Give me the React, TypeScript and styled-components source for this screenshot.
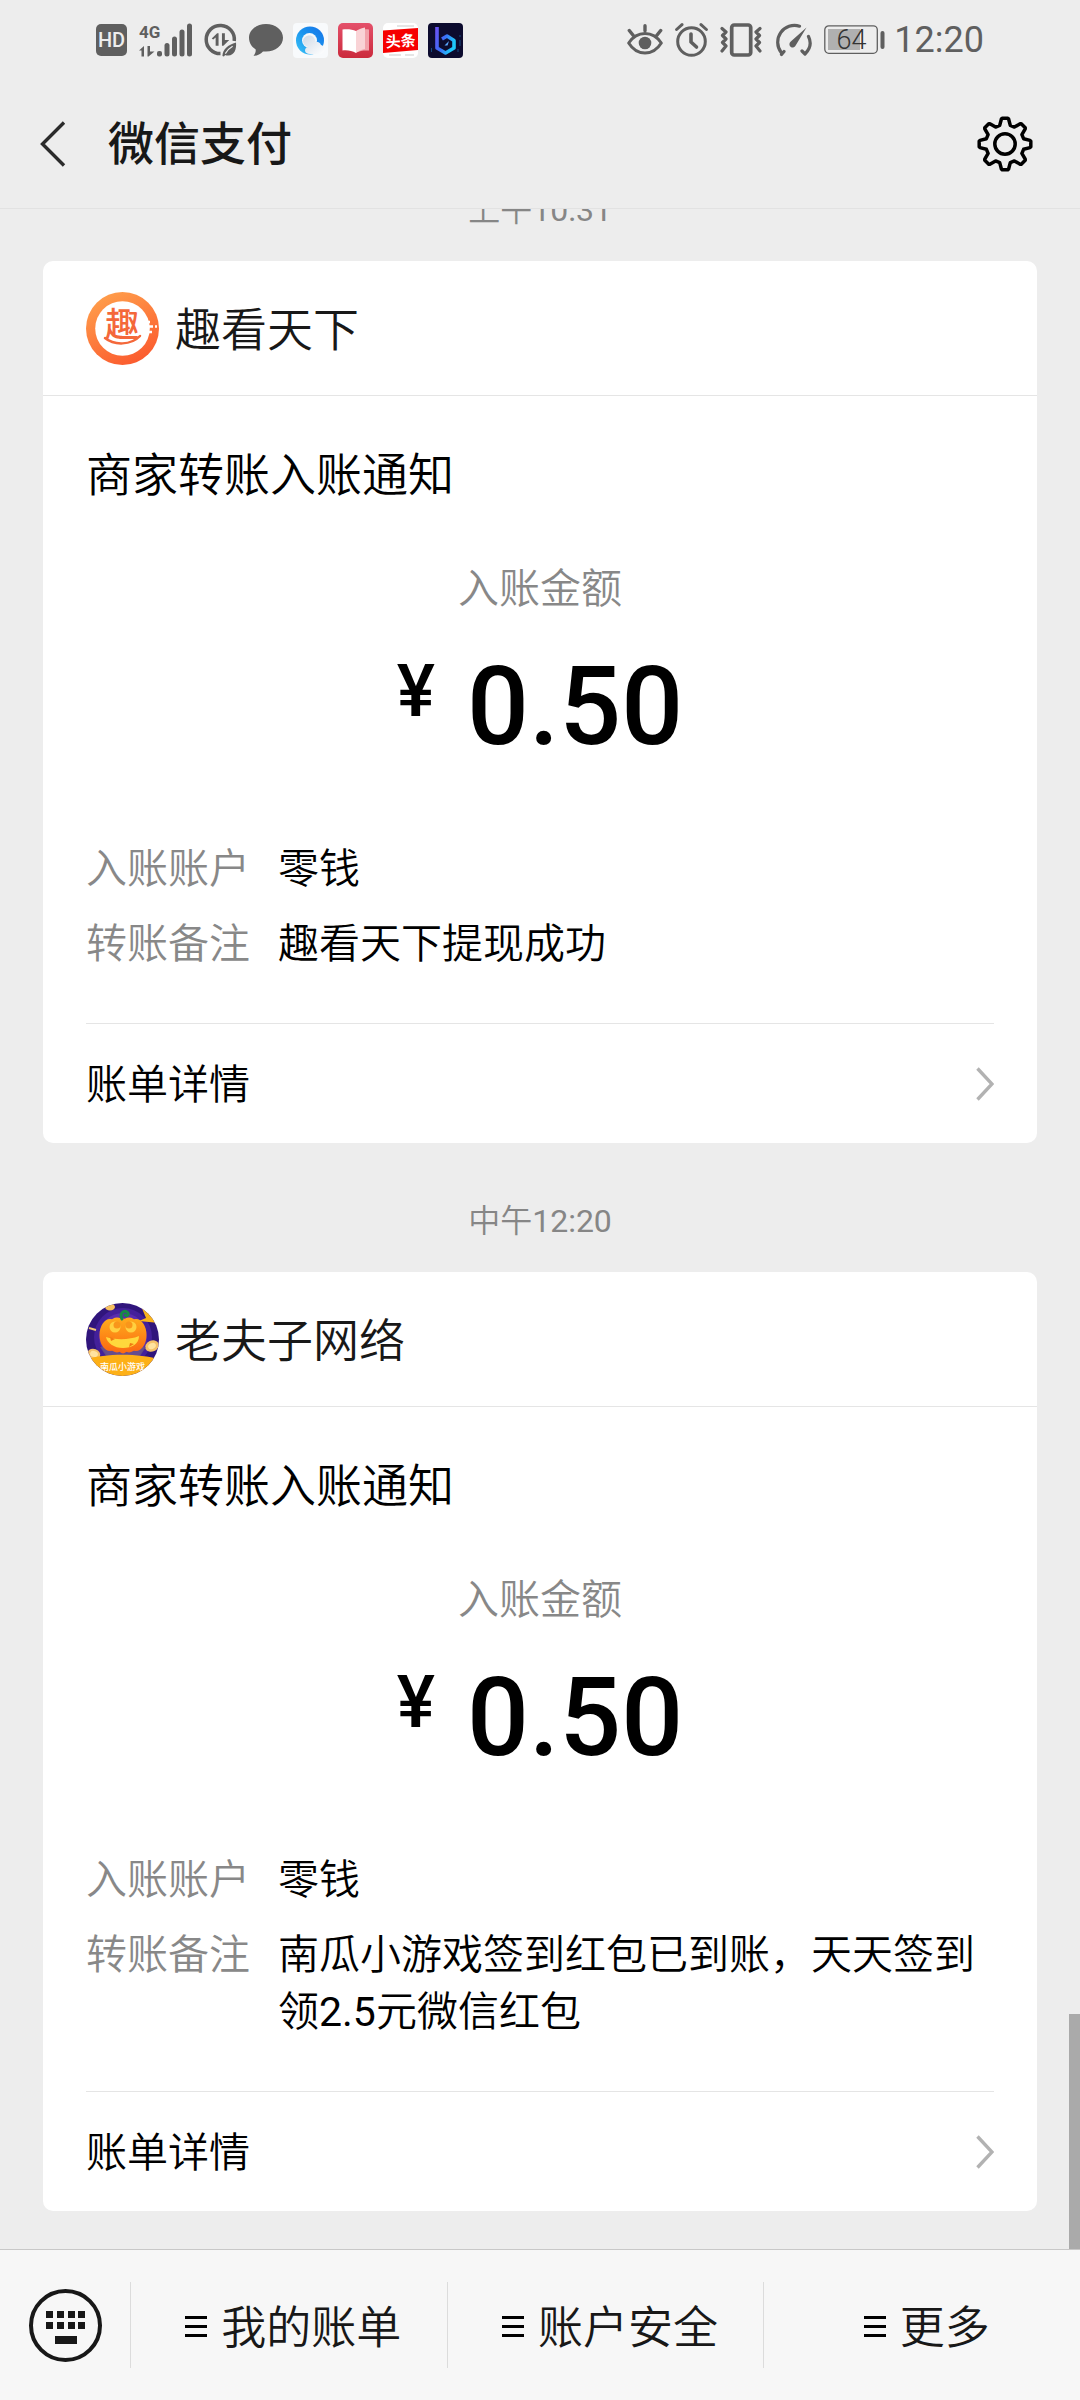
import React from 'react';
import styled, { createGlobalStyle } from 'styled-components';

const FONT = 'Roboto, "Noto Sans CJK SC", sans-serif';
const INK = '#5f5f5f';

const GlobalStyle = createGlobalStyle`
  *, *::before, *::after { box-sizing: border-box; }
  body { margin: 0; background: #ededed; }
  button { margin: 0; padding: 0; border: 0; background: none; color: inherit; font: inherit; cursor: pointer; }
`;

const Screen = styled.div`
  display: flex;
  flex-direction: column;
  height: 100vh;
  background: #ededed;
  color: #000;
  font-family: ${FONT};
  font-weight: 350;
`;

const StatusBar = styled.div`
  flex: none;
  display: flex;
  align-items: center;
  justify-content: space-between;
  height: 80px;
  padding: 0 96px;
  color: ${INK};
`;

const StatusGroup = styled.div<{ $gap: number }>`
  display: flex;
  align-items: center;
  gap: ${(p) => p.$gap}px;
  svg { display: block; flex: none; }
`;

const Clock = styled.time`
  font-size: 36px;
  line-height: 40px;
  font-weight: 400;
`;

const NavBar = styled.header`
  flex: none;
  display: flex;
  align-items: center;
  height: 129px;
  padding: 0 47px 0 40px;
  border-bottom: 1px solid #e2e2e2;
`;

const Heading = styled.h1`
  flex: 1;
  margin: 0;
  padding-left: 42px;
  font-size: 46px;
  line-height: 60px;
  font-weight: 500;
  color: #181818;
`;

const IconButton = styled.button`
  display: flex;
  align-items: center;
  justify-content: center;
  svg { display: block; }
`;

const ThreadFrame = styled.div`
  position: relative;
  flex: 1;
  min-height: 0;
`;

/* Reversed column, so the conversation opens at its newest message. */
const ThreadScroll = styled.main`
  display: flex;
  flex-direction: column-reverse;
  height: 100%;
  overflow-y: auto;
  scrollbar-width: none;
`;

const Thread = styled.div`
  padding: 0 43px 38px;
`;

const ScrollThumb = styled.div`
  position: absolute;
  right: 0;
  bottom: 0;
  width: 11px;
  height: 235px;
  background: #aaa;
`;

/* Latin digits are set a step heavier than the thin Chinese text around them. */
const Digits = styled.span`
  font-weight: 400;
`;

const Stamp = styled.time`
  display: block;
  padding: 58px 0 31px;
  text-align: center;
  font-size: 32px;
  line-height: 40px;
  color: #868686;
`;

const Card = styled.article`
  background: #fff;
  border-radius: 10px;
`;

const CardHeader = styled.div`
  display: flex;
  align-items: center;
  gap: 16px;
  height: 135px;
  padding: 0 43px;
  border-bottom: 1px solid #e5e5e5;
  svg { display: block; flex: none; }
`;

const Merchant = styled.span`
  padding-top: 4px;
  font-size: 46px;
  line-height: 60px;
  color: #181818;
`;

const CardBody = styled.div`
  padding: 49px 43px 50px;
`;

const CardTitle = styled.h2`
  margin: 0;
  font-size: 46px;
  line-height: 60px;
  font-weight: inherit;
`;

const AmountLabel = styled.div`
  margin-top: 56px;
  text-align: center;
  font-size: 41px;
  line-height: 57px;
  color: #888;
`;

const Amount = styled.div`
  display: flex;
  justify-content: center;
  align-items: flex-start;
  gap: 32px;
  margin-top: 34px;
  font-size: 109px;
  line-height: 110px;
  font-weight: 500;
`;

const Currency = styled.span`
  font-size: 72px;
  line-height: 80px;
`;

const Details = styled.dl`
  display: grid;
  grid-template-columns: 164px 1fr;
  gap: 18px 28px;
  margin: 79px 0 0;
  font-size: 41px;
  line-height: 57px;
`;

const Term = styled.dt`
  color: #888;
`;

const Value = styled.dd`
  margin: 0;
`;

const DetailLink = styled.a`
  display: flex;
  align-items: center;
  justify-content: space-between;
  height: 120px;
  margin: 0 43px;
  border-top: 1px solid #e5e5e5;
  font-size: 41px;
  line-height: 57px;
  color: #000;
  text-decoration: none;
  svg { display: block; }
`;

const LinkText = styled.span`
  padding-top: 4px;
`;

const BottomBar = styled.nav`
  flex: none;
  display: flex;
  align-items: center;
  height: 151px;
  border-top: 1px solid #c8c8c8;
  background: #f7f7f7;
`;

const KeyboardButton = styled(IconButton)`
  width: 130px;
`;

const MenuButton = styled.button`
  flex: 1;
  display: flex;
  align-items: center;
  justify-content: center;
  gap: 14px;
  height: 86px;
  padding-left: 9px;
  border-left: 1px solid #dcdcdc;
  color: #181818;
  svg { display: block; }
`;

const MenuText = styled.span`
  padding-top: 8px;
  font-size: 45px;
  line-height: 60px;
`;

const HdIcon = () => (
  <svg width="31" height="32" viewBox="0 0 31 32">
    <rect width="31" height="32" rx="5" fill={INK} />
    <text x="15.5" y="23" textAnchor="middle" fontFamily="Roboto, sans-serif" fontWeight="500" fontSize="20" fill="#ededed">HD</text>
  </svg>
);

const SignalIcon = () => (
  <svg width="53" height="34" viewBox="0 0 53 34" fill={INK}>
    <text x="0" y="14.5" fontFamily="Roboto, sans-serif" fontWeight="700" fontSize="17">4G</text>
    <path d="M0 27.5 5 23v10.500H2.500V27.500zM8.500 23H11v5.500h4.500L9.500 33.500h-1z" />
    <rect x="18" y="28" width="5" height="5.500" rx="2" />
    <rect x="25.500" y="20" width="5" height="13.500" rx="2.500" />
    <rect x="33" y="13.500" width="5" height="20" rx="2.500" />
    <rect x="40.500" y="6.500" width="5" height="27" rx="2.500" />
    <rect x="48" y="0.500" width="5" height="33" rx="2.500" />
  </svg>
);

const DataSaverIcon = () => (
  <svg width="33" height="34" viewBox="0 0 34 34" fill="none">
    <path d="M17 31A14.500 14.500 0 1 1 31.200 18" stroke={INK} strokeWidth="3.600" />
    <path d="M8 15.500 13.500 10h1.500v13h-3v-8.500L9.500 16.500zM18.500 10h3v7H26l-6 6h-1.500z" fill={INK} />
    <path d="M33 19.500c.6 7-1.500 13-8 13.500-1.500.1-2.400-.2-3.200-.6L20.500 34l-1.500-.5c.2-7 5.500-11.500 14-14z" fill={INK} />
    <path d="M22 31c2-3.500 4-5.500 7.500-7.500" stroke="#ededed" strokeWidth="1.200" />
  </svg>
);

const BubbleIcon = () => (
  <svg width="34" height="32" viewBox="0 0 34 32">
    <path d="M17 0c9.500 0 17 6 17 13.800s-7.500 13.800-17 13.800c-1 0-2 0-3-.2-2.500 2.800-5.500 4.200-9.500 4.300 1.700-2 2.400-4 2.200-6.300C2.600 23 0 18.800 0 13.800 0 6 7.500 0 17 0z" fill={INK} />
  </svg>
);

const BrowserAppIcon = () => (
  <svg width="35" height="35" viewBox="0 0 35 35">
    <defs>
      <linearGradient id="ring" x1="0" y1="1" x2="1" y2="0">
        <stop offset="0" stopColor="#3cc6f7" />
        <stop offset="0.500" stopColor="#1a94ee" />
        <stop offset="1" stopColor="#1672e8" />
      </linearGradient>
      <linearGradient id="cloud" x1="0" y1="0" x2="1" y2="1">
        <stop offset="0" stopColor="#cfd9e6" />
        <stop offset="1" stopColor="#fff" />
      </linearGradient>
    </defs>
    <rect width="35" height="35" rx="4" fill="#f8fafc" />
    <circle cx="17" cy="17.500" r="14" fill="url(#ring)" />
    <circle cx="16.500" cy="17.500" r="7.500" fill="#f4f7fa" />
    <path d="M17 31c-3 0-5-1.500-5-3.500s1-3 3-3.500c-3-1-5-3-5-6 0-3 3-5.500 6.500-5.500S22 15 22.500 19c1.500-.5 4.500 0 5.500 3 2 .5 3.500 2 3.500 4.500S29 31 26.500 31z" fill="url(#cloud)" />
  </svg>
);

const ReaderAppIcon = () => (
  <svg width="35" height="35" viewBox="0 0 35 35">
    <defs>
      <linearGradient id="cover" x1="0" y1="0" x2="0" y2="1">
        <stop offset="0" stopColor="#e4506a" />
        <stop offset="1" stopColor="#cb2a3c" />
      </linearGradient>
    </defs>
    <rect width="35" height="35" rx="5" fill="url(#cover)" />
    <path d="M18 8c4-1.500 8-2 13-1.500v21c-5-.3-9 .2-13 2z" fill="#f2a3ab" />
    <path d="M18 8c3-2 6-3 9-3.500v21.500c-3 .5-6 1.500-9 4z" fill="#f9d3d6" />
    <path d="M4.500 6.500C10 6 14.500 6.500 18 8v22c-4-2.300-8.500-3-13.500-2.500z" fill="#fff" />
  </svg>
);

const NewsAppIcon = () => (
  <svg width="35" height="35" viewBox="0 0 35 35">
    <rect width="35" height="35" rx="5" fill="#fff" />
    <path d="M14 3h17M6 32h12M22 32h9" stroke="#ddd" strokeWidth="1.500" />
    <path d="M0 7.500 35 5v22L0 30z" fill="#f60000" />
    <text x="17.500" y="23.500" textAnchor="middle" fontFamily='"Noto Sans CJK SC", sans-serif' fontWeight="700" fontSize="15" fill="#fff" transform="rotate(-4 17.500 17.500)">头条</text>
  </svg>
);

const BlueAppIcon = () => (
  <svg width="35" height="35" viewBox="0 0 35 35" fill="none">
    <defs>
      <linearGradient id="neon" x1="0" y1="0" x2="1" y2="0.600">
        <stop offset="0" stopColor="#6a52f4" />
        <stop offset="0.500" stopColor="#3c6cf6" />
        <stop offset="1" stopColor="#1ec8fa" />
      </linearGradient>
    </defs>
    <rect width="35" height="35" rx="4" fill="#0c0b2e" />
    <path d="M9 4v21l8.500 5 8.500-5v-7.500L19 13l-5 3" stroke="url(#neon)" strokeWidth="3.600" strokeLinejoin="round" />
    <path d="M16.500 22.500 21 18l-1.500 4.500z" fill="#5aa8ff" />
    <path d="M32 12v2M32 17v6M30 26v3M3.500 25v4" stroke="#174a80" strokeWidth="1" />
  </svg>
);

const EyeIcon = () => (
  <svg width="36" height="32" viewBox="0 0 36 32" fill="none" stroke={INK} strokeWidth="3.400" strokeLinecap="round">
    <path d="M1.700 19C6 12.500 11.500 9.500 18 9.500S30 12.500 34.300 19C30 26 24.500 29 18 29S6 26 1.700 19z" strokeWidth="3" strokeLinejoin="round" />
    <path d="M18 1.800v5M2.300 6.500l4 5M33.700 6.500l-4 5" />
    <circle cx="18" cy="19" r="6.300" fill={INK} stroke="none" />
  </svg>
);

const AlarmIcon = () => (
  <svg width="33" height="34" viewBox="0 0 33 34" fill="none" stroke={INK} strokeWidth="3" strokeLinecap="round" strokeLinejoin="round">
    <circle cx="16.500" cy="18.500" r="13.800" />
    <path d="M16 11v8l5.500 5" strokeWidth="3.600" />
    <path d="M1.600 6.500 7 1.600M31.400 6.500 26 1.600" />
  </svg>
);

const VibrateIcon = () => (
  <svg width="42" height="34" viewBox="0 0 42 34" fill="none" stroke={INK} strokeLinecap="round" strokeLinejoin="round">
    <rect x="11.700" y="2" width="19" height="30" rx="2.500" strokeWidth="3.700" />
    <path d="M2 5.500 6 9 2.500 12.500 6 16l-3.500 3.500L6 23l-4 5M40 5.500 36 9l3.500 3.500L36 16l3.500 3.500L36 23l4 5" strokeWidth="3.200" />
  </svg>
);

const GaugeIcon = () => (
  <svg width="38" height="34" viewBox="0 0 38 34" fill="none" stroke={INK} strokeLinecap="round">
    <path d="M25.500 3.200A16.800 16.800 0 0 0 7.200 29.500M7.500 31.500 10 28.500" strokeWidth="3.200" />
    <path d="M34.500 13.500c3.500 7 1 13-3.500 17.500M31 31l-3-3" strokeWidth="3.200" />
    <path d="M32.500 4.500 21.800 22.300A3.300 3.300 0 1 1 16.500 18.700z" fill={INK} stroke="none" />
  </svg>
);

const BatteryIcon = () => (
  <svg width="61" height="30" viewBox="0 0 61 30">
    <rect x="0.800" y="0.800" width="52.500" height="27.500" rx="4" fill="none" stroke={INK} strokeWidth="1.300" />
    <rect x="4" y="4" width="32" height="21" fill="#b0b0b0" />
    <rect x="56.500" y="6" width="4" height="18" rx="2" fill={INK} />
    <text x="27.500" y="24" textAnchor="middle" fontFamily="Roboto, sans-serif" fontWeight="300" fontSize="27" fill="#333">64</text>
  </svg>
);

const BackIcon = () => (
  <svg width="26" height="46" viewBox="0 0 26 46" fill="none">
    <path d="M24 1.500 2.500 23 24 44.500" stroke="#2b2b2b" strokeWidth="3.400" />
  </svg>
);

/* One tooth, as offsets from the hub; the outline repeats it every 45 degrees. */
const TOOTH: [number, number][] = [
  [-5.3, -18.6],
  [-3.6, -25],
  [-2.8, -25.8],
  [2.8, -25.8],
  [3.6, -25],
  [5.3, -18.6],
];

const GEAR_POINTS = Array.from({ length: 8 }, (_, i) => {
  const a = (i * Math.PI) / 4;
  return TOOTH.map(
    ([x, y]) =>
      `${(28 + x * Math.cos(a) - y * Math.sin(a)).toFixed(2)},${(28 + x * Math.sin(a) + y * Math.cos(a)).toFixed(2)}`,
  ).join(' ');
}).join(' ');

const GearIcon = () => (
  <svg width="56" height="56" viewBox="0 0 56 56" fill="none" stroke="#000" strokeWidth="3.500" strokeLinejoin="round">
    <polygon points={GEAR_POINTS} />
    <circle cx="28" cy="28" r="10.200" />
  </svg>
);

const QukanLogo = () => (
  <svg width="73" height="73" viewBox="0 0 73 73">
    <defs>
      <linearGradient id="orange" x1="0.200" y1="0" x2="0.700" y2="1">
        <stop offset="0" stopColor="#ffa04c" />
        <stop offset="1" stopColor="#fb5a2e" />
      </linearGradient>
    </defs>
    <circle cx="36.500" cy="36.500" r="36.500" fill="url(#orange)" />
    <circle cx="36.500" cy="36.500" r="27.300" fill="#fff" />
    <path d="M60 30h4M60 34.500h7M69 34.500h2M60 40h6" stroke="#fff" strokeWidth="2.500" />
    <text x="36" y="45" textAnchor="middle" fontFamily='"Noto Sans CJK SC", sans-serif' fontWeight="500" fontSize="34" fill="#f4683a">趣</text>
    <path d="M19 46c9 7.500 26 7.500 35-2" fill="none" stroke="#f4683a" strokeWidth="2.500" strokeLinecap="round" />
  </svg>
);

const PumpkinLogo = () => (
  <svg width="73" height="73" viewBox="0 0 73 73">
    <defs>
      <clipPath id="disc">
        <circle cx="36.500" cy="36.500" r="36.500" />
      </clipPath>
      <linearGradient id="pumpkin" x1="0" y1="0" x2="0" y2="1">
        <stop offset="0" stopColor="#ffab1c" />
        <stop offset="1" stopColor="#fb6a12" />
      </linearGradient>
    </defs>
    <g clipPath="url(#disc)">
      <rect width="73" height="73" fill="#30157c" />
      <circle cx="37" cy="34" r="29" fill="#43209a" />
      <circle cx="37" cy="34" r="24" fill="#5a2cae" />
      <path d="M55 3 60 15 53 18l20 2V8z" fill="#f9b41c" />
      <ellipse cx="24" cy="4" rx="5" ry="3.500" fill="#f6c060" />
      <path d="M3 25l7 2" stroke="#f6c878" strokeWidth="2" />
      <ellipse cx="66" cy="43" rx="7" ry="5.500" fill="#f5c26a" transform="rotate(-25 66 43)" />
      <ellipse cx="66" cy="43" rx="4" ry="3" fill="#ffe3a0" transform="rotate(-25 66 43)" />
      <ellipse cx="8" cy="51" rx="6.500" ry="5" fill="#f5c26a" transform="rotate(20 8 51)" />
      <ellipse cx="8" cy="51" rx="4" ry="3" fill="#ffe3a0" transform="rotate(20 8 51)" />
      <path d="M14 44h46l-8 12H22z" fill="#6a5a80" opacity="0.700" />
      <ellipse cx="24" cy="32" rx="10.500" ry="16" fill="url(#pumpkin)" />
      <ellipse cx="50" cy="32" rx="10.500" ry="16" fill="url(#pumpkin)" />
      <ellipse cx="31" cy="32" rx="11" ry="17.500" fill="url(#pumpkin)" />
      <ellipse cx="43" cy="32" rx="11" ry="17.500" fill="url(#pumpkin)" />
      <ellipse cx="37" cy="33" rx="8" ry="17.500" fill="url(#pumpkin)" />
      <path d="M36 16c-3-6 2-9 5-7s0 5-2 3" fill="none" stroke="#178a45" strokeWidth="3" strokeLinecap="round" />
      <circle cx="29" cy="24" r="5.500" fill="#ffd040" />
      <circle cx="45" cy="24" r="5.500" fill="#ffd040" />
      <circle cx="31" cy="22" r="3.500" fill="#f9961a" />
      <circle cx="43" cy="22" r="3.500" fill="#f9961a" />
      <path d="M20 34c9 3 24 3 33-1 0 8-7 12-16 12s-16-5-17-11z" fill="#ffd83c" />
      <path d="M24 34l1 4 4-2zM43 44l1-4 4 1z" fill="#f07a12" />
      <path d="M-2 57c20-7 57-7 77 0v18H-2z" fill="#fdb017" />
      <text x="36.500" y="67" textAnchor="middle" fontFamily='"Noto Sans CJK SC", sans-serif' fontWeight="500" fontSize="9" fill="#fff">南瓜小游戏</text>
    </g>
  </svg>
);

const ChevronIcon = () => (
  <svg width="18" height="34" viewBox="0 0 18 34" fill="none">
    <path d="M1.500 1.500 16 17 1.500 32.500" stroke="#b2b2b2" strokeWidth="3.400" />
  </svg>
);

const KeyboardIcon = () => (
  <svg width="73" height="75" viewBox="0 0 73 75">
    <circle cx="36.500" cy="37.500" r="34.500" fill="none" stroke="#181818" strokeWidth="4" />
    {[17, 28, 39, 49].map((x) => (
      <React.Fragment key={x}>
        <rect x={x} y="23" width="7" height="7" fill="#181818" />
        <rect x={x} y="34" width="7" height="7" fill="#181818" />
      </React.Fragment>
    ))}
    <rect x="26" y="48" width="22" height="8" fill="#181818" />
  </svg>
);

const MenuIcon = () => (
  <svg width="22" height="23" viewBox="0 0 22 23" fill="#000">
    <rect y="2" width="22" height="3" />
    <rect y="11" width="22" height="3" />
    <rect y="20" width="22" height="3" />
  </svg>
);

type Notice = {
  id: string;
  period: string;
  time: string;
  merchant: string;
  logo: React.ReactNode;
  amount: string;
  note: React.ReactNode;
};

const NOTICES: Notice[] = [
  {
    id: 'qukan',
    period: '上午',
    time: '10:31',
    merchant: '趣看天下',
    logo: <QukanLogo />,
    amount: '0.50',
    note: '趣看天下提现成功',
  },
  {
    id: 'laofuzi',
    period: '中午',
    time: '12:20',
    merchant: '老夫子网络',
    logo: <PumpkinLogo />,
    amount: '0.50',
    note: (
      <>
        南瓜小游戏签到红包已到账，天天签到领<Digits>2.5</Digits>元微信红包
      </>
    ),
  },
];

const NoticeCard = ({ notice }: { notice: Notice }) => (
  <>
    <Stamp>
      {notice.period}
      <Digits>{notice.time}</Digits>
    </Stamp>
    <Card>
      <CardHeader>
        {notice.logo}
        <Merchant>{notice.merchant}</Merchant>
      </CardHeader>
      <CardBody>
        <CardTitle>商家转账入账通知</CardTitle>
        <AmountLabel>入账金额</AmountLabel>
        <Amount>
          <Currency>¥</Currency>
          <span>{notice.amount}</span>
        </Amount>
        <Details>
          <Term>入账账户</Term>
          <Value>零钱</Value>
          <Term>转账备注</Term>
          <Value>{notice.note}</Value>
        </Details>
      </CardBody>
      <DetailLink href="#bill">
        <LinkText>账单详情</LinkText>
        <ChevronIcon />
      </DetailLink>
    </Card>
  </>
);

export default function App() {
  return (
    <Screen lang="zh-CN">
      <GlobalStyle />
      <StatusBar>
        <StatusGroup $gap={10}>
          <StatusGroup $gap={12}>
            <HdIcon />
            <SignalIcon />
            <DataSaverIcon />
            <BubbleIcon />
          </StatusGroup>
          <BrowserAppIcon />
          <ReaderAppIcon />
          <NewsAppIcon />
          <BlueAppIcon />
        </StatusGroup>
        <StatusGroup $gap={9}>
          <StatusGroup $gap={12}>
            <EyeIcon />
            <AlarmIcon />
            <VibrateIcon />
            <GaugeIcon />
            <BatteryIcon />
          </StatusGroup>
          <Clock>12:20</Clock>
        </StatusGroup>
      </StatusBar>
      <NavBar>
        <IconButton type="button" aria-label="返回">
          <BackIcon />
        </IconButton>
        <Heading>微信支付</Heading>
        <IconButton type="button" aria-label="设置">
          <GearIcon />
        </IconButton>
      </NavBar>
      <ThreadFrame>
        <ThreadScroll>
          <Thread>
            {NOTICES.map((n) => (
              <NoticeCard key={n.id} notice={n} />
            ))}
          </Thread>
        </ThreadScroll>
        <ScrollThumb />
      </ThreadFrame>
      <BottomBar>
        <KeyboardButton type="button" aria-label="键盘">
          <KeyboardIcon />
        </KeyboardButton>
        {['我的账单', '账户安全', '更多'].map((label) => (
          <MenuButton type="button" key={label}>
            <MenuIcon />
            <MenuText>{label}</MenuText>
          </MenuButton>
        ))}
      </BottomBar>
    </Screen>
  );
}
